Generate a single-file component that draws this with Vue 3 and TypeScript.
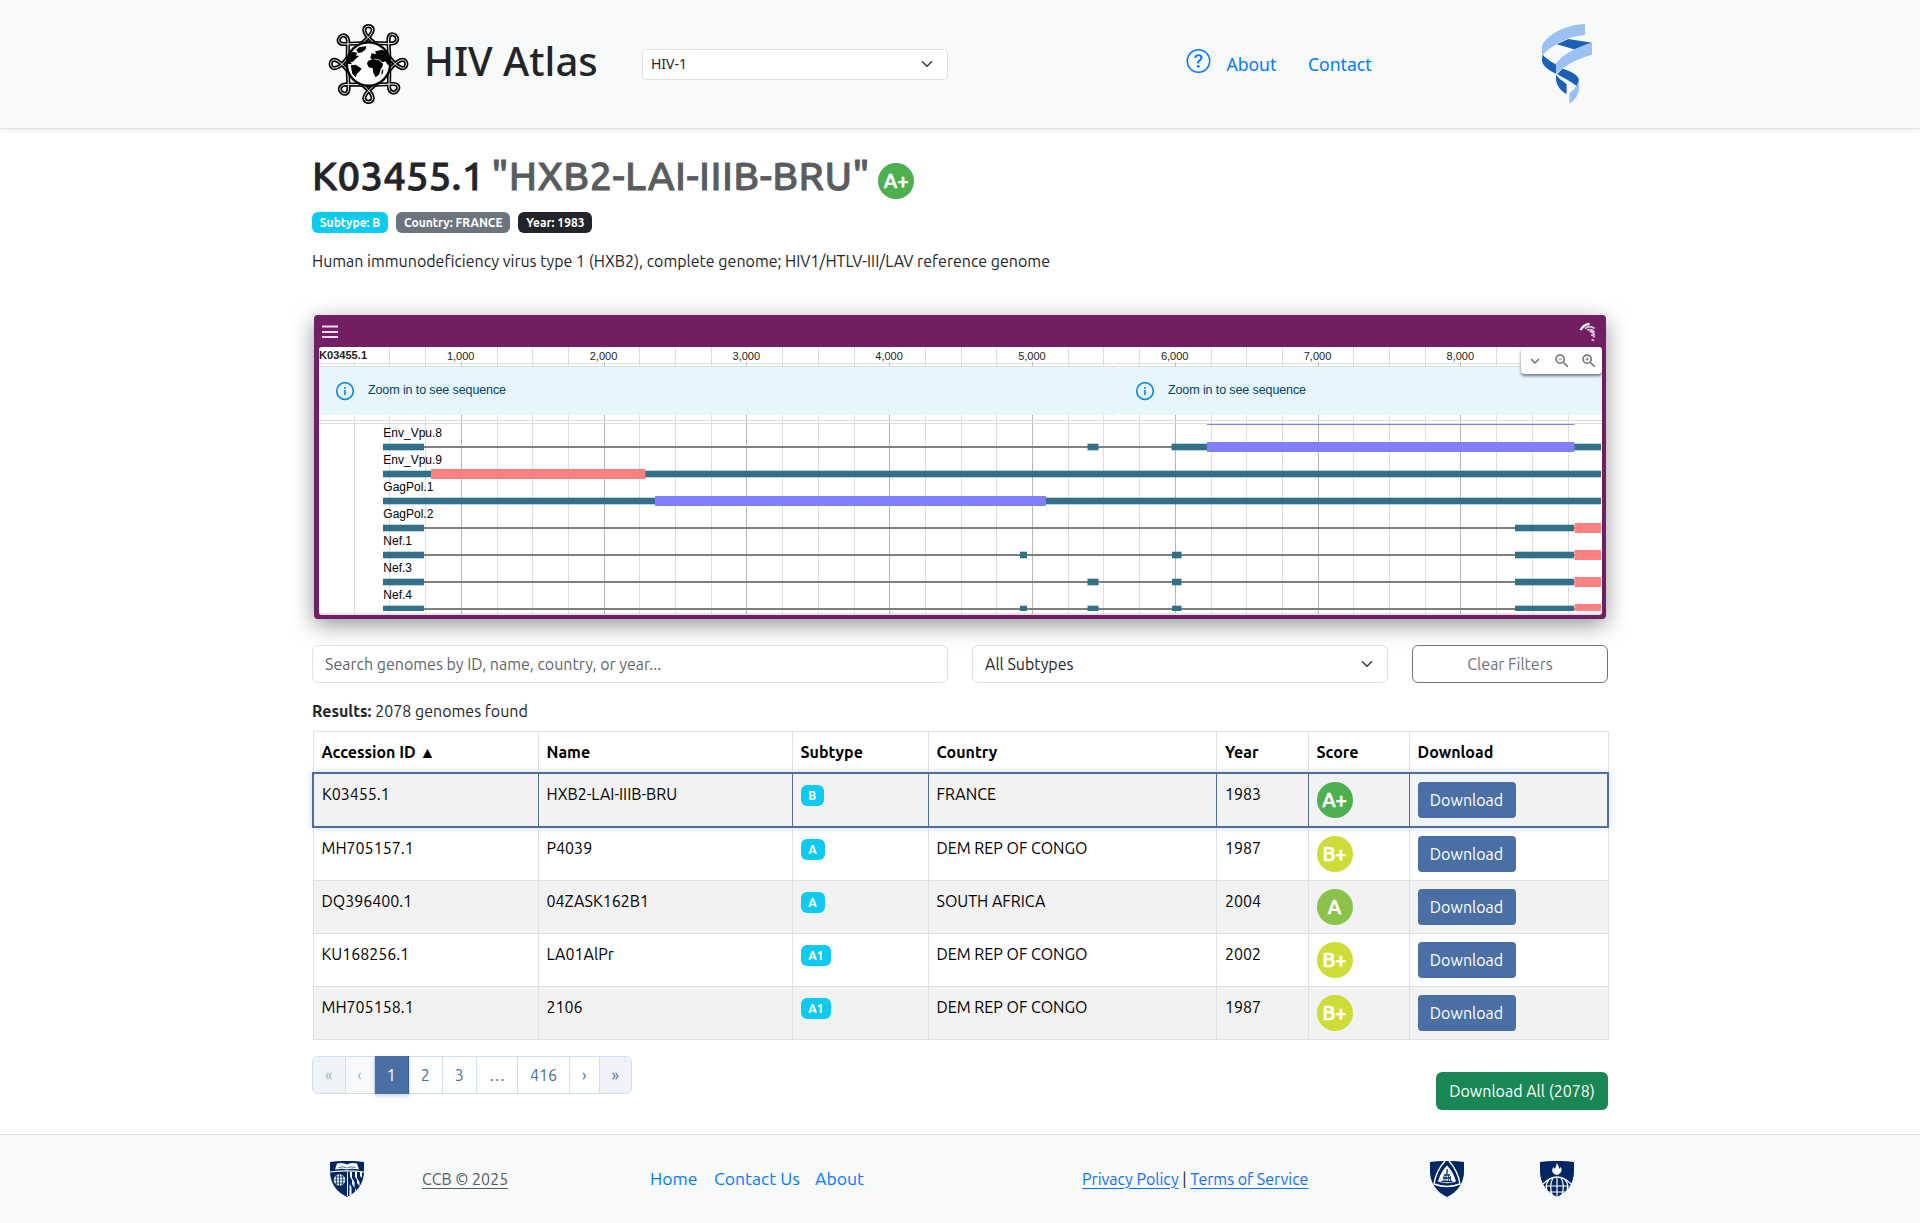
<script setup lang="ts">
interface Genome { id: string; name: string; subtype: string; country: string; year: number; score: string }
interface Track { name: string; exons: [number, number][]; cds?: [number, number]; color?: string }

const genomes: Genome[] = [
  { id: 'K03455.1', name: 'HXB2-LAI-IIIB-BRU', subtype: 'B', country: 'FRANCE', year: 1983, score: 'A+' },
  { id: 'MH705157.1', name: 'P4039', subtype: 'A', country: 'DEM REP OF CONGO', year: 1987, score: 'B+' },
  { id: 'DQ396400.1', name: '04ZASK162B1', subtype: 'A', country: 'SOUTH AFRICA', year: 2004, score: 'A' },
  { id: 'KU168256.1', name: 'LA01AlPr', subtype: 'A1', country: 'DEM REP OF CONGO', year: 2002, score: 'B+' },
  { id: 'MH705158.1', name: '2106', subtype: 'A1', country: 'DEM REP OF CONGO', year: 1987, score: 'B+' },
]
const scoreColors: Record<string, string> = { 'A+': '#4caf50', A: '#8bc34a', 'B+': '#cddc39' }
const headers = ['Accession ID ▲', 'Name', 'Subtype', 'Country', 'Year', 'Score', 'Download']
const colWidths = [225, 254, 136, 288.5, 91.5, 101, 199]
const pages = [
  { label: '«', width: 32.5, cls: 'edge off' },
  { label: '‹', width: 29, cls: 'off' },
  { label: '1', width: 34.5, cls: 'on' },
  { label: '2', width: 33.5, cls: '' },
  { label: '3', width: 34.3, cls: '' },
  { label: '…', width: 41.3, cls: '' },
  { label: '416', width: 51.8, cls: '' },
  { label: '›', width: 29.8, cls: '' },
  { label: '»', width: 31.3, cls: 'edge' },
]

const red = '#ff8080'
const violet = '#8080ff'
const tail: [number, number] = [1197, 1256]
const tracks: Track[] = [
  { name: 'Env_Vpu.8', exons: [[65, 106], [769.5, 780.5], [853.5, 889], [1256, 1283]], cds: [889, 1256.5], color: violet },
  { name: 'Env_Vpu.9', exons: [[65, 1283]], cds: [113, 327.5], color: red },
  { name: 'GagPol.1', exons: [[65, 1283]], cds: [337, 728], color: violet },
  { name: 'GagPol.2', exons: [[65, 106], tail], cds: [1256.5, 1283], color: red },
  { name: 'Nef.1', exons: [[65, 106], [702, 709], [854, 863.5], tail], cds: [1256.5, 1283], color: red },
  { name: 'Nef.3', exons: [[65, 106], [769.5, 780.5], [854, 863.5], tail], cds: [1256.5, 1283], color: red },
  { name: 'Nef.4', exons: [[65, 106], [702, 709], [769.5, 780.5], [854, 863.5], tail], cds: [1256.5, 1283], color: red },
]
const gridLines = Array.from({ length: 35 }, (_, i) => ({ x: Math.floor((i + 1) * 35.7 - 0.42) + 0.5, major: (i + 1) % 4 === 0 }))
const rulerLabels = Array.from({ length: 8 }, (_, i) => ({ x: (i + 1) * 142.8 - 1.1, text: `${i + 1},000` }))
const alerts = [0, 800]
</script>

<template>
  <header class="topbar">
    <div class="wrap topbar-inner">
      <svg class="logo" viewBox="25 27 243 240">
        <g fill="none">
          <template v-for="w in 2" :key="w">
            <g v-for="a in [0, 90, 180, 270]" :key="a" :transform="`rotate(${a} 146.5 147)`" :stroke="w === 1 ? '#000' : '#f8f9fa'" :stroke-width="w === 1 ? 12.5 : 3">
              <path d="M112 94C138 80 159 55 159 44C159 30 134 30 134 44C134 58 153 80 181 94" />
              <path d="M146 84L76 87C56 88 54 76 61 67C70 56 83 62 85 76L84 147" />
            </g>
          </template>
        </g>
        <circle cx="146.500" cy="147" r="65" fill="#fff" stroke="#000" stroke-width="7" />
        <path d="M110 104L119 96L140 94L138 103L127 112L116 114ZM82 124L98 110L112 113L109 122L119 122L110 130L100 140L92 142L98 148L82 146ZM93 151L108 149L126 161L120 169L112 176L108 187L98 176ZM145 138L160 132L178 136L190 146L188 156L183 163L179 178L168 187L161 174L159 160L147 157L142 146ZM152 128L156 115L170 117L166 109L188 104L202 114L211 138L206 152L197 139L188 142L180 134L166 131L156 133ZM186 168L191 161L190 174L185 180Z" fill="#000" />
      </svg>
      <span class="brand">HIV Atlas</span>
      <div class="select small"><span>HIV-1</span><svg class="chev" viewBox="0 0 16 16"><path d="m2 5 6 6 6-6" /></svg></div>
      <svg class="help" viewBox="0 0 16 16"><path d="M8 15A7 7 0 1 1 8 1a7 7 0 0 1 0 14m0 1A8 8 0 1 0 8 0a8 8 0 0 0 0 16" /><path d="M5.255 5.786a.237.237 0 0 0 .241.247h.825c.138 0 .248-.113.266-.25.09-.656.54-1.134 1.342-1.134.686 0 1.314.343 1.314 1.168 0 .635-.374.927-.965 1.371-.673.489-1.206 1.060-1.168 1.987l.003.217a.25.25 0 0 0 .25.246h.811a.25.25 0 0 0 .25-.25v-.105c0-.718.273-.927 1.010-1.486.609-.463 1.244-.977 1.244-2.056 0-1.511-1.276-2.241-2.673-2.241-1.267 0-2.655.590-2.750 2.286m1.557 5.763c0 .533.425.927 1.010.927.609 0 1.028-.394 1.028-.927 0-.552-.420-.940-1.029-.940-.584 0-1.009.388-1.009.940" /></svg>
      <a class="nav about">About</a>
      <a class="nav contact">Contact</a>
      <svg class="ribbon" viewBox="1146 72 150 240">
        <g fill="#1c60b4">
          <path d="M1225 117L1296 128L1252 151L1190 133Z" />
          <path d="M1147 162C1155 174 1172 184 1190 194V222C1164 210 1146 194 1146 182Z" />
          <path d="M1208 206C1235 214 1256 226 1257 240L1250 259C1232 242 1212 236 1192 222Z" />
          <path d="M1188 224C1198 238 1210 242 1220 253V282C1200 272 1188 252 1188 236Z" />
        </g>
        <g fill="#9ac1f2">
          <path d="M1275 72V105C1240 107 1207 120 1190 133C1170 144 1155 155 1148 166L1146 170V138C1158 106 1215 74 1275 72Z" />
          <path d="M1296 128V164C1262 172 1212 195 1190 222L1188 224V190C1206 166 1250 139 1296 128Z" />
          <path d="M1257 238V262C1257 285 1245 300 1228 312V280C1240 272 1253 258 1257 238Z" />
        </g>
      </svg>
    </div>
  </header>

  <main class="wrap">
    <h1><span>K03455.1</span> <span class="muted">"HXB2-LAI-IIIB-BRU"</span><span class="score" :style="{ background: scoreColors['A+'] }">A+</span></h1>
    <div class="badges">
      <span class="badge info">Subtype: B</span>
      <span class="badge gray">Country: FRANCE</span>
      <span class="badge dark">Year: 1983</span>
    </div>
    <p class="desc">Human immunodeficiency virus type 1 (HXB2), complete genome; HIV1/HTLV-III/LAV reference genome</p>

    <section class="browser">
      <div class="browser-bar">
        <svg width="16" height="14" viewBox="0 0 16 14"><path d="M0 1.500h16M0 7h16M0 12h16" stroke="#fff" stroke-width="1.800" opacity=".85" /></svg>
        <svg width="18" height="20" viewBox="0 0 18 20" fill="none" stroke="#fff"><path d="M1.500 8C4 4 7 2 10.500 2" stroke-width="2.300" /><path d="M6 6.500c4-3 7-2 9.500 0M8 8c3-1 6 0 7.500 2.500M10.500 9.500c2 0 4.500 2 5 4M12 13c1.500 0 3 1 3.500 2.500M12.500 17.500l2.500 1" stroke-width="1.700" opacity=".75" /></svg>
      </div>
      <div class="view">
        <svg width="1283" height="268" viewBox="0 0 1283 268">
          <line v-for="g in gridLines" :key="g.x" :x1="g.x" :x2="g.x" y1="0" y2="267" :stroke="g.major ? '#b5b5b5' : '#dedede'" />
          <g class="ruler">
            <g v-for="l in rulerLabels" :key="l.x">
              <rect :x="l.x - 16" y="1" width="32" height="14" fill="#fff" />
              <text :x="l.x" y="13" text-anchor="middle">{{ l.text }}</text>
            </g>
            <rect x="0" y="1" width="48" height="14" fill="#fff" />
            <text x="0" y="12" font-weight="700" textLength="48">K03455.1</text>
          </g>
          <path d="M0 16.500H1283M0 19.500H1283M0 73.500H1283M0 76.500H1283" stroke="#dcdcdc" />
          <g v-for="x in alerts" :key="x">
            <rect :x="x" y="20" :width="x ? 484 : 800" height="48" rx="4" fill="#e5f6fd" />
            <circle :cx="x + 26" cy="44" r="8.300" fill="none" stroke="#158fd8" stroke-width="1.700" />
            <path :d="`M${x + 26} 40v1.800M${x + 26} 43v5.300`" stroke="#158fd8" stroke-width="1.700" />
            <text class="zoom-text" :x="x + 49" y="47" textLength="138">Zoom in to see sequence</text>
          </g>
          <path d="M888 77.500H1255.500" :stroke="violet" />
          <g v-for="(t, i) in tracks" :key="t.name" :transform="`translate(-1 ${100 + i * 27})`">
            <text class="track-name" x="65.300" y="-10">{{ t.name }}</text>
            <path d="M65 0H1283" stroke="#808080" stroke-width="2" />
            <rect v-for="e in t.exons" :key="e[0]" :x="e[0]" y="-3.300" :width="e[1] - e[0]" :height="i === 6 ? 5.300 : 6.600" fill="#32708a" />
            <rect v-if="t.cds" :x="t.cds[0]" y="-5" :width="t.cds[1] - t.cds[0]" :height="i === 6 ? 7 : 10" :fill="t.color" />
          </g>
          <path d="M0 267H1283" stroke="#ccc" />
        </svg>
        <div class="mini">
          <svg viewBox="0 0 24 24"><path d="M7.410 8.590 12 13.170l4.590-4.580L18 10l-6 6-6-6z" /></svg>
          <svg viewBox="0 0 24 24"><path d="M15.500 14h-.790l-.280-.270A6.471 6.471 0 0 0 16 9.500 6.500 6.500 0 1 0 9.500 16c1.610 0 3.090-.590 4.230-1.570l.270.280v.790l5 4.990L20.490 19zm-6 0C7.010 14 5 11.990 5 9.500S7.010 5 9.500 5 14 7.010 14 9.500 11.990 14 9.500 14M7 9h5v1H7z" /></svg>
          <svg viewBox="0 0 24 24"><path d="M15.500 14h-.790l-.280-.270A6.471 6.471 0 0 0 16 9.500 6.500 6.500 0 1 0 9.500 16c1.610 0 3.090-.590 4.230-1.570l.270.280v.790l5 4.990L20.490 19zm-6 0C7.010 14 5 11.990 5 9.500S7.010 5 9.500 5 14 7.010 14 9.500 11.990 14 9.500 14m2.500-4h-2v2H9v-2H7V9h2V7h1v2h2z" /></svg>
        </div>
      </div>
    </section>

    <div class="filters">
      <div class="search">Search genomes by ID, name, country, or year...</div>
      <div class="select"><span>All Subtypes</span><svg class="chev" viewBox="0 0 16 16"><path d="m2 5 6 6 6-6" /></svg></div>
      <button class="clear">Clear Filters</button>
    </div>
    <p class="results"><strong>Results:</strong> 2078 genomes found</p>

    <table>
      <colgroup><col v-for="w in colWidths" :key="w" :style="{ width: w + 'px' }" /></colgroup>
      <thead><tr><th v-for="h in headers" :key="h">{{ h }}</th></tr></thead>
      <tbody>
        <tr v-for="(g, i) in genomes" :key="g.id" :class="{ active: i === 0 }">
          <td>{{ g.id }}</td>
          <td>{{ g.name }}</td>
          <td><span class="badge info">{{ g.subtype }}</span></td>
          <td>{{ g.country }}</td>
          <td>{{ g.year }}</td>
          <td><span class="score" :style="{ background: scoreColors[g.score] }">{{ g.score }}</span></td>
          <td><button class="dl">Download</button></td>
        </tr>
      </tbody>
    </table>

    <div class="bottom">
      <nav class="pages">
        <span v-for="p in pages" :key="p.label" :class="p.cls" :style="{ width: p.width + 'px' }">{{ p.label }}</span>
      </nav>
      <button class="all">Download All (2078)</button>
    </div>
  </main>

  <footer>
    <div class="wrap foot">
      <svg class="shield s1" viewBox="0 0 34 36">
        <path d="M0 1C11-.4 23-.4 34 1V10C34 23 27 31 17 36C7 31 0 23 0 10Z" fill="#002663" />
        <path d="M0 11C11 9.500 23 9.500 34 11" stroke="#f8f9fa" stroke-width="1.200" fill="none" />
        <path d="M7 2.500Q13 1 17 3.500Q21 1 27 2.500L29 8.500Q21 7 17 8.500Q13 7 5 8.500Z" fill="#fff" />
        <path d="M8.500 6.500Q13 5 16.500 6.800M17.500 6.800Q21 5 25.500 6.500" stroke="#002663" stroke-width=".7" fill="none" />
        <circle cx="9.500" cy="19" r="5.800" fill="#fff" />
        <path d="M4 19H15M5 16H14M5 22H14M9.500 13V25M7 14Q5.500 19 7 24M12 14Q13.500 19 12 24" stroke="#002663" stroke-width=".8" fill="none" />
        <path d="M17.500 11V35" stroke="#fff" stroke-width="1" />
        <path d="M20 11h2v6l2.500 4v6l-2.500-4v-4l-2-3zM25 11h2v6l2.500 4v4l-2.500-3v-3l-2-3zM30 11h2v6l-2-2zM19.500 23l2 3v8l-2 1zM25 27l1 2-1 2z" fill="#fff" />
      </svg>
      <a class="ccb">CCB © 2025</a>
      <a class="flink home">Home</a>
      <a class="flink cu">Contact Us</a>
      <a class="flink ab">About</a>
      <span class="legal"><a>Privacy Policy</a> | <a>Terms of Service</a></span>
      <svg class="shield s2" viewBox="0 0 34 36">
        <path d="M0 1C11-.4 23-.4 34 1V10C34 23 27 31 17 36C7 31 0 23 0 10Z" fill="#002663" />
        <path d="M15 0Q6 10 4 23Q17 28 30 23Q28 10 19 0" stroke="#fff" stroke-width="1.400" fill="none" />
        <path d="M17 4.500Q10.500 11 8 20.500Q17 24 26 20.500Q23.500 11 17 4.500Z" fill="#fff" />
        <path d="M17 8v5M14 14h6M13 17h8M11.500 20.500h11" stroke="#002663" stroke-width="1.300" />
        <path d="M14 14.500v6M16 14.500v6M18.500 14.500v6M20.500 15v5.500" stroke="#002663" stroke-width=".8" />
      </svg>
      <svg class="shield s3" viewBox="0 0 34 36">
        <path d="M0 1C11-.4 23-.4 34 1V10C34 23 27 31 17 36C7 31 0 23 0 10Z" fill="#002663" />
        <path d="M17 14C12 13 11 9 13.500 6L14.500 8Q17 5 16.500 2Q19.500 5 19 8L20.500 6C23 9 21 13 17 14Z" fill="#fff" />
        <g stroke="#fff" fill="none" stroke-width="1.200"><path d="M3 23Q17 9 31 23M5 25H29M9 31H25M17 17V36M13 17Q9 24 12 34M21 17Q25 24 22 34M9 19Q5 23 7 29M25 19Q29 23 27 29" /></g>
      </svg>
    </div>
  </footer>
</template>

<style>
body { margin: 0; background: #fff; }
#app { font: 400 16px/24px Ubuntu, "Noto Sans", sans-serif; color: #212529; }
</style>
<style scoped>
* { box-sizing: border-box; }
.wrap { width: 1296px; margin: 0 auto; }
.topbar { height: 129px; background: #f8f9fa; border-bottom: 1px solid #dee2e6; box-shadow: 0 2px 4px rgba(0, 0, 0, .075); font-family: "Noto Sans", sans-serif; }
.topbar-inner { display: flex; align-items: center; height: 128px; }
.logo { width: 81px; height: 80px; margin-left: 16px; flex: none; }
.brand { width: 217px; margin-left: 15px; padding-bottom: 7px; font-size: 40px; font-weight: 500; line-height: 48px; white-space: nowrap; }
.select { display: flex; align-items: center; justify-content: space-between; width: 416px; height: 38px; padding: 0 12px; background: #fff; border: 1px solid #dee2e6; border-radius: 6px; }
.select.small { width: 306px; height: 31px; padding: 0 12px 0 8px; margin-left: 1px; border-radius: 4px; font-size: 14px; }
.chev { width: 16px; height: 12px; fill: none; stroke: #343a40; stroke-width: 2; stroke-linecap: round; stroke-linejoin: round; }
.help { width: 25px; height: 24px; margin: 0 0 6px 238px; fill: #007bff; flex: none; }
.nav { color: #007bff; font-size: 17.6px; }
.about { width: 81.6px; margin-left: 15.4px; }
.contact { width: 64px; }
.ribbon { width: 50px; height: 80px; margin-left: 170px; flex: none; }

h1 { display: flex; align-items: center; margin: 23px 0 0; height: 48px; font-size: 40px; font-weight: 500; line-height: 48px; letter-spacing: .25px; white-space: pre; -webkit-text-stroke: .8px currentColor; }
h1 .muted { color: #595c5f; margin-left: 7px; letter-spacing: .38px; }
.score { display: flex; align-items: center; justify-content: center; width: 36px; height: 36px; border-radius: 50%; color: #fff; font-size: 20px; font-weight: 500; line-height: 30px; letter-spacing: 0; -webkit-text-stroke: .7px #fff; }
h1 .score { margin: 9px 0 0 8.5px; }
.badges { display: flex; gap: 8px; margin-top: 12px; }
.badge { display: inline-block; height: 21px; padding: 0 7.8px; border-radius: 6px; color: #fff; font-size: 12px; font-weight: 700; line-height: 21px; text-align: center; white-space: nowrap; }
.info { background: #0dcaf0; }
.gray { background: #6c757d; }
.dark { background: #212529; }
.desc { margin: 16px 0 0; }

.browser { width: 1292px; height: 304px; margin: 42px 2px 0; padding: 0 4px 0 5px; background: #721e63; border-radius: 4px; box-shadow: 0 6px 22px rgba(0, 0, 0, .42); }
.browser-bar { display: flex; justify-content: space-between; align-items: center; height: 32px; padding: 1px 5px 0 3px; }
.view { position: relative; width: 1283px; height: 268px; background: #fff; border-radius: 3px; overflow: hidden; }
.view > svg { display: block; }
.ruler, .zoom-text, .track-name { font-family: "Liberation Sans", Arial, sans-serif; }
.ruler { font-size: 11px; fill: #222; }
.zoom-text { font-size: 12.5px; fill: #014361; }
.track-name { font-size: 12px; fill: #000; }
.mini { position: absolute; top: 0; right: 0; display: flex; align-items: center; width: 81px; height: 27px; background: #fff; border-radius: 4px; box-shadow: 0 2px 3px rgba(0, 0, 0, .5); }
.mini svg { width: 18px; height: 18px; margin: 0 4.5px; fill: #707070; }

.filters { display: flex; gap: 24px; margin-top: 26px; }
.search { width: 636px; height: 38px; padding: 0 12px; border: 1px solid #dee2e6; border-radius: 6px; background: #fff; color: #5f656a; line-height: 36px; }
.clear, .dl, .all { border: 0; font: inherit; padding: 0; }
.clear { width: 196px; height: 38px; background: #fff; color: #6c757d; border: 1px solid #6c757d; border-radius: 6px; }
.results { margin: 16px 0 8px; }

table { width: 1295px; table-layout: fixed; border-collapse: collapse; color: #000; }
th, td { padding: 8px; border: 1px solid #dee2e6; text-align: left; vertical-align: top; line-height: 24px; white-space: nowrap; }
th { font-weight: 700; }
tbody tr:nth-child(odd) td { background: #f2f2f2; }
tr.active td { border-color: #4a6fa5; border-top-width: 2px; border-bottom-width: 2px; }
tr.active td:first-child { border-left-width: 2px; }
tr.active td:last-child { border-right-width: 2px; }
tr.active { box-shadow: 0 0 8px rgba(74, 111, 165, .3); }
.dl { display: block; width: 98px; height: 36px; background: #4a6fa5; color: #fff; border-radius: 4px; }

.bottom { display: flex; justify-content: space-between; margin-top: 16px; height: 78px; }
.pages { display: flex; width: 320px; height: 38px; border: 1px solid #d0e0f0; border-radius: 6px; color: #4a6fa5; }
.pages span { line-height: 36px; text-align: center; border-right: 1px solid #d0e0f0; }
.pages span:last-child { border-right: 0; }
.pages .edge { background: #eff3f8; border-radius: 5px 0 0 5px; }
.pages .edge:last-child { border-radius: 0 5px 5px 0; }
.pages .off { color: #a4b5cc; }
.pages .off:not(.edge) { background: #f8f9fa; }
.pages .on { height: 38px; margin-top: -1px; line-height: 38px; background: #4a6fa5; color: #fff; border-color: #3a5a8a; box-shadow: 0 2px 4px rgba(74, 111, 165, .3); }
.all { width: 172px; height: 38px; margin-top: 16px; background: #198754; color: #fff; border-radius: 6px; }

footer { height: 89px; background: #f8f9fa; border-top: 1px solid #dee2e6; }
.foot { display: flex; align-items: center; height: 87px; white-space: nowrap; }
.shield { width: 34px; height: 36px; flex: none; }
.s1 { margin-left: 18px; }
.ccb { width: 86px; margin-left: 58px; color: #595c5f; text-decoration: underline; text-underline-offset: 3px; }
.flink { color: #007bff; font-size: 17.6px; }
.home { width: 64px; margin-left: 142px; }
.cu { width: 101px; }
.ab { width: 50px; }
.legal { width: 226px; margin-left: 217px; }
.legal a { color: #0d6efd; text-decoration: underline; text-underline-offset: 3px; }
.s2 { margin-left: 122px; }
.s3 { margin-left: 76px; }
</style>
